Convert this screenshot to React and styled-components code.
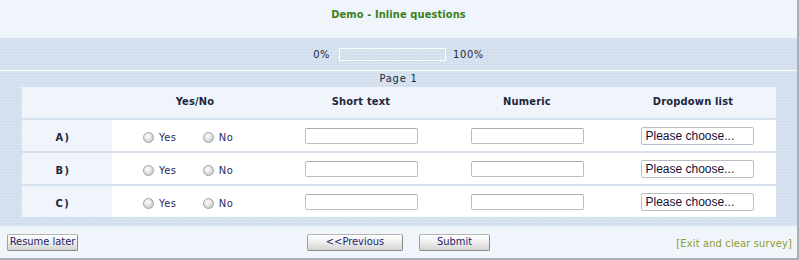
import React from "react";
import styled, { createGlobalStyle } from "styled-components";

const Global = createGlobalStyle`
  html, body { margin: 0; padding: 0; background: #fff; }
  body { font-family: "DejaVu Sans Condensed", "DejaVu Sans", Verdana, sans-serif; font-size: 11px; color: #1c2740; }
`;

const dotted = `
  background-color: #d5e1ee;
  background-image: radial-gradient(circle, #cad7e8 0.6px, transparent 0.8px),
    radial-gradient(circle, #dde7f2 0.6px, transparent 0.8px);
  background-size: 3px 3px, 3px 3px;
  background-position: 0 0, 1px 2px;
`;

const Frame = styled.div`
  width: 799px;
  height: 260px;
  box-sizing: border-box;
  border-right: 2px solid #a8aeb5;
  border-bottom: 2px solid #a8aeb5;
  display: flex;
  flex-direction: column;
  ${dotted}
`;

const Header = styled.div`
  height: 38px;
  box-sizing: border-box;
  background: #eff5fb;
  display: flex;
  justify-content: center;
  padding-top: 8px;
`;

const Title = styled.div`
  font-weight: bold;
  color: #3a7f1c;
  font-size: 11px;
  line-height: 13px;
  letter-spacing: 0.1px;
`;

const ProgressRow = styled.div`
  height: 32px;
  display: flex;
  align-items: center;
  justify-content: center;
  gap: 9px;
  border-bottom: 1px solid #fff;
  color: #1c2740;
  letter-spacing: 0.6px;
`;

const Bar = styled.div`
  width: 107px;
  height: 13px;
  box-sizing: border-box;
  border: 1px solid #fff;
  margin-right: -2px;
`;

const PageLabel = styled.div`
  height: 16px;
  line-height: 15px;
  text-align: center;
  color: #1c2740;
  letter-spacing: 0.8px;
`;

const Table = styled.div`
  margin: 0 22px;
  display: grid;
  grid-template-columns: 90px 166px 166px 166px 166px;
  background: #d5e1ee;
`;

const HeadCell = styled.div`
  height: 31px;
  background: #eff5fb;
  display: flex;
  align-items: center;
  justify-content: center;
  font-weight: bold;
  color: #1c2740;
  padding-bottom: 3px;
  box-sizing: border-box;
  letter-spacing: 0.2px;
`;

const Cell = styled.div`
  height: 31px;
  margin-top: 2px;
  background: ${(p) => (p.$label ? "#eff5fb" : "#fff")};
  display: flex;
  align-items: center;
  justify-content: ${(p) => p.$align || "center"};
  padding: ${(p) => p.$pad || "0"};
  box-sizing: border-box;
  font-weight: ${(p) => (p.$label ? "bold" : "normal")};
  letter-spacing: ${(p) => (p.$label ? "1.5px" : "normal")};
`;

const Option = styled.label`
  display: flex;
  align-items: center;
  gap: 5px;
  color: #262a66;
  margin-top: 3px;
  letter-spacing: 0.6px;
  margin-right: ${(p) => p.$mr || "0"};
`;

const Radio = styled.input.attrs({ type: "radio" })`
  appearance: none;
  margin: 0;
  width: 11px;
  height: 11px;
  border-radius: 50%;
  border: 1px solid #a0a4a8;
  box-sizing: border-box;
  background: radial-gradient(circle at 40% 35%, #ffffff 0%, #e2e2e2 45%, #b8bcbf 100%);
`;

const TextInput = styled.input`
  width: 113px;
  height: 16px;
  box-sizing: border-box;
  border: 1px solid #b9bec5;
  border-top-color: #a9adb3;
  border-radius: 2px;
  background: #fff;
  padding: 0;
`;

const Select = styled.div`
  width: 113px;
  height: 18px;
  box-sizing: border-box;
  border: 1px solid #b9bec5;
  border-radius: 2px;
  background: #fff;
  margin-left: 8px;
  font-family: "Liberation Sans", Arial, sans-serif;
  font-size: 12px;
  line-height: 16px;
  color: #1a0f30;
  padding-left: 4px;
  white-space: nowrap;
  overflow: hidden;
`;

const Spacer = styled.div`
  height: 9px;
`;

const Footer = styled.div`
  flex: 1;
  background: #eff5fb;
  display: grid;
  grid-template-columns: 1fr auto 1fr;
  align-items: center;
  padding: 0 5px 0 7px;
`;

const Button = styled.button`
  width: ${(p) => p.$w}px;
  height: 17px;
  box-sizing: border-box;
  border: 1px solid #8a8a8a;
  border-top-color: #b5b5b5;
  border-left-color: #a0a0a0;
  border-radius: 2px;
  background: linear-gradient(#ffffff 0%, #f2f2f2 40%, #d4d4d4 100%);
  font-family: "DejaVu Sans Condensed", "DejaVu Sans", sans-serif;
  font-size: 11px;
  color: #1e2466;
  padding: 0;
  line-height: 14px;
`;

const Center = styled.div`
  display: flex;
  gap: 16px;
  margin-left: -2px;
`;

const Exit = styled.a`
  justify-self: end;
  color: #8f9b2e;
  text-decoration: none;
  margin-top: 2px;
  letter-spacing: 0.15px;
`;

const Left = styled.div`
  display: flex;
`;

const rows = ["A)", "B)", "C)"];

export default function App() {
  return (
    <>
      <Global />
      <Frame>
        <Header>
          <Title>Demo - Inline questions</Title>
        </Header>
        <ProgressRow>
          <span>0%</span>
          <Bar />
          <span>100%</span>
        </ProgressRow>
        <PageLabel>Page 1</PageLabel>
        <Table>
          <HeadCell />
          <HeadCell>Yes/No</HeadCell>
          <HeadCell>Short text</HeadCell>
          <HeadCell>Numeric</HeadCell>
          <HeadCell>Dropdown list</HeadCell>
          {rows.map((r) => (
            <React.Fragment key={r}>
              <Cell $label $pad="3px 8px 0 0">{r}</Cell>
              <Cell $align="flex-start" $pad="0 0 0 31px">
                <Option $mr="26px">
                  <Radio name={r} />
                  Yes
                </Option>
                <Option>
                  <Radio name={r} />
                  No
                </Option>
              </Cell>
              <Cell>
                <TextInput />
              </Cell>
              <Cell>
                <TextInput />
              </Cell>
              <Cell>
                <Select>Please choose...</Select>
              </Cell>
            </React.Fragment>
          ))}
        </Table>
        <Spacer />
        <Footer>
          <Left>
            <Button $w={71}>Resume later</Button>
          </Left>
          <Center>
            <Button $w={96}>&lt;&lt;Previous</Button>
            <Button $w={71}>Submit</Button>
          </Center>
          <Exit href="#">[Exit and clear survey]</Exit>
        </Footer>
      </Frame>
    </>
  );
}
